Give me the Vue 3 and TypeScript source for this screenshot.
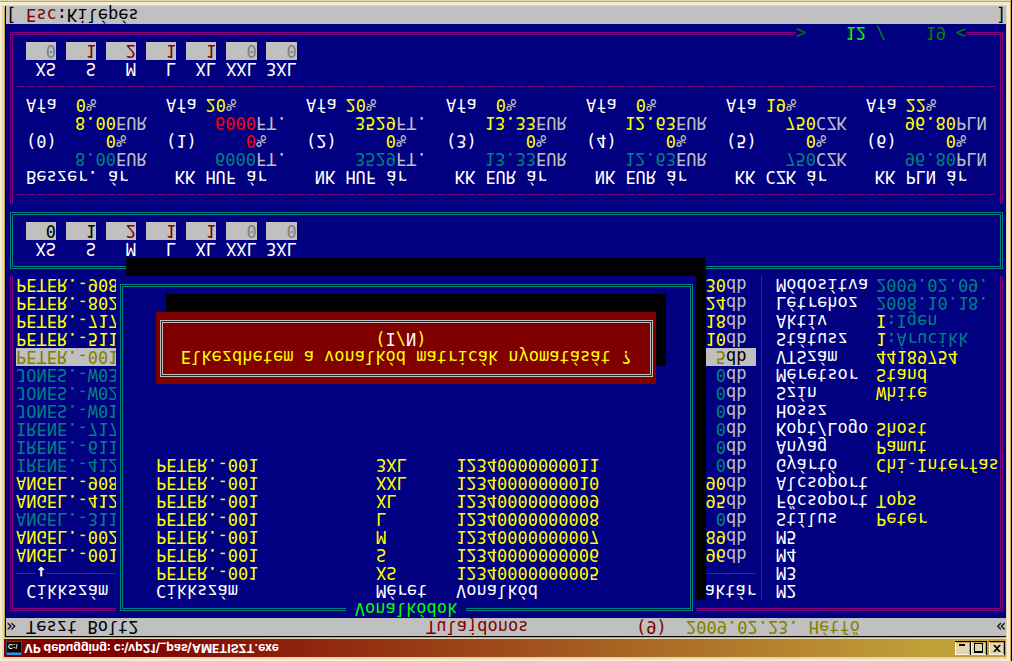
<script setup lang="ts">
interface SizeField { label: string; value: string; tone: string }
interface Article { code: string; stock: string; tone: string }
interface Detail { label: string; key?: string; value?: string; tone?: string }
interface Price { title: string; key: string; list: string; unit: string; percent: string; vat: string; tone: string }

const sizeNames = ['XS', 'S', 'M', 'L', 'XL', 'XXL', '3XL']

const makeSizes = (values: string[], tones: string[]): SizeField[] =>
  sizeNames.map((label, i) => ({ label, value: values[i], tone: tones[i] }))

const panels = [
  {
    id: 'stock',
    sizes: makeSizes(['0', '1', '2', '1', '1', '0', '0'], ['black', 'black', 'maroon', 'maroon', 'maroon', 'gray', 'gray']),
  },
  {
    id: 'order',
    sizes: makeSizes(['0', '1', '2', '1', '1', '0', '0'], ['gray', 'maroon', 'maroon', 'maroon', 'maroon', 'gray', 'gray']),
  },
]

const articles: Article[] = [
  { code: 'ANGEL.-001', stock: '96', tone: 'yellow' },
  { code: 'ANGEL.-002', stock: '89', tone: 'yellow' },
  { code: 'ANGEL.-311', stock: '0', tone: 'teal' },
  { code: 'ANGEL.-412', stock: '95', tone: 'yellow' },
  { code: 'ANGEL.-908', stock: '90', tone: 'yellow' },
  { code: 'IRENE.-412', stock: '0', tone: 'teal' },
  { code: 'IRENE.-611', stock: '0', tone: 'teal' },
  { code: 'IRENE.-717', stock: '0', tone: 'teal' },
  { code: 'JONES.-W01', stock: '0', tone: 'teal' },
  { code: 'JONES.-W02', stock: '0', tone: 'teal' },
  { code: 'JONES.-W03', stock: '0', tone: 'teal' },
  { code: 'PETER.-001', stock: '5', tone: 'selected' },
  { code: 'PETER.-511', stock: '10', tone: 'yellow' },
  { code: 'PETER.-717', stock: '18', tone: 'yellow' },
  { code: 'PETER.-802', stock: '24', tone: 'yellow' },
  { code: 'PETER.-908', stock: '30', tone: 'yellow' },
]

const details: Detail[] = [
  { label: 'M2' },
  { label: 'M3' },
  { label: 'M4' },
  { label: 'M5' },
  { label: 'Stílus', value: 'Peter' },
  { label: 'Főcsoport', value: 'Tops' },
  { label: 'Alcsoport' },
  { label: 'Gyártó', value: 'Chi-Interfas' },
  { label: 'Anyag', value: 'Pamut' },
  { label: 'Kopt/Logo', value: 'Shost' },
  { label: 'Hossz' },
  { label: 'Szín', value: 'White' },
  { label: 'Méretsor', value: 'Stand' },
  { label: 'VTSzám', value: '44189754' },
  { label: 'Státusz', key: '1', value: ':Árucikk', tone: 'teal' },
  { label: 'Aktív', key: 'I', value: ':Igen', tone: 'teal' },
  { label: 'Létrehoz', value: '2008.10.18.', tone: 'teal' },
  { label: 'Módosítva', value: '2009.02.09.', tone: 'teal' },
]

const prices: Price[] = [
  { title: 'Beszer. ár', key: '(0)', list: '8.00', unit: 'EUR', percent: '0', vat: '0', tone: 'yellow' },
  { title: 'KK HUF ár', key: '(1)', list: '6000', unit: 'FT.', percent: '0', vat: '20', tone: 'red' },
  { title: 'NK HUF ár', key: '(2)', list: '3529', unit: 'FT.', percent: '0', vat: '20', tone: 'yellow' },
  { title: 'KK EUR ár', key: '(3)', list: '13.33', unit: 'EUR', percent: '0', vat: '0', tone: 'yellow' },
  { title: 'NK EUR ár', key: '(4)', list: '12.63', unit: 'EUR', percent: '0', vat: '0', tone: 'yellow' },
  { title: 'KK CZK ár', key: '(5)', list: '750', unit: 'CZK', percent: '0', vat: '19', tone: 'yellow' },
  { title: 'KK PLN ár', key: '(6)', list: '96.80', unit: 'PLN', percent: '0', vat: '22', tone: 'yellow' },
]

const barcodes = sizeNames.map((size, i) => ({
  code: 'PETER.-001',
  size,
  barcode: String(12340000000005 + i),
}))
</script>

<template>
  <main class="window">
    <header class="titlebar">
      <svg class="app-icon" viewBox="0 0 16 14" aria-hidden="true">
        <rect width="16" height="14" fill="#2a4a74" />
        <rect x="1" y="3" width="14" height="10" fill="#000" />
        <rect x="1" y="0" width="14" height="2" fill="#2f8fe0" />
        <text x="2" y="11" class="icon-text">C:\</text>
      </svg>
      <h1>VP debugging: c:\vp21\_pas\AMETISZT.exe</h1>
      <div class="controls">
        <button type="button" aria-label="Minimize">
          <svg viewBox="0 0 16 14"><rect x="4" y="9" width="6" height="2" /></svg>
        </button>
        <button type="button" aria-label="Maximize">
          <svg viewBox="0 0 16 14"><path d="M3 2h9v10H3zM4 4v7h7V4z" fill-rule="evenodd" /></svg>
        </button>
        <button type="button" class="close" aria-label="Close">
          <svg viewBox="0 0 16 14"><path d="M4 3h2l2 2 2-2h2L9 6.500 12 10h-2L8 8l-2 2H4l3-3.500z" /></svg>
        </button>
      </div>
    </header>

    <div class="screen">
      <div class="bar top">
        <span class="c0">»</span>
        <span class="c2">Teszt Bolt2</span>
        <span class="c42 maroon">Tulajdonos</span>
        <span class="c63 maroon">(9)</span>
        <span class="c68 olive">2009.02.23. Hétfő</span>
        <span class="c99">«</span>
      </div>

      <section class="catalog frame">
        <table class="articles">
          <thead>
            <tr><th>&nbsp;Cikkszám</th><th></th><th class="end">Raktár</th></tr>
            <tr aria-hidden="true">
              <td class="rule sorted"><span class="arrow">↓</span></td><td></td><td class="rule"></td>
            </tr>
          </thead>
          <tbody>
            <tr v-for="a in articles" :key="a.code" :class="a.tone">
              <td>{{ a.code }}</td><td></td>
              <td class="amount">{{ a.stock }}<span class="unit">db</span></td>
            </tr>
          </tbody>
        </table>
        <div class="divider"></div>
        <dl class="details">
          <div v-for="d in details" :key="d.label">
            <dt>{{ d.label }}</dt>
            <dd :class="d.tone"><span class="yellow">{{ d.key }}</span>{{ d.value }}</dd>
          </div>
        </dl>

        <div class="prices">
          <div class="dashes"></div>
          <ul>
            <li v-for="p in prices" :key="p.key">
              <h2>{{ p.title }}</h2>
              <p><span></span><span class="num teal">{{ p.list }}</span><span>{{ p.unit }}</span></p>
              <p><b>{{ p.key }}</b><span class="num" :class="p.tone">{{ p.percent }}</span><span>%</span></p>
              <p><span></span><span class="num" :class="p.tone">{{ p.list }}</span><span>{{ p.unit }}</span></p>
              <p class="vat"><b>Afa</b><span class="num yellow">{{ p.vat }}</span><span>%</span></p>
            </li>
          </ul>
          <div class="dashes"></div>
        </div>
        <p class="counter green">
          <span>&gt;</span><span class="num lime">12</span><span class="num">/</span><span class="num">19</span><span class="num">&lt;</span>
        </p>
      </section>

      <section v-for="panel in panels" :key="panel.id" :class="['sizes', panel.id, { frame: panel.id === 'stock' }]">
        <label v-for="s in panel.sizes" :key="s.label">
          <span>{{ s.label }}</span>
          <input type="text" :value="s.value" :class="s.tone">
        </label>
      </section>

      <div class="bar bottom">
        <span class="c0">[</span>
        <span class="c2"><span class="maroon">Esc</span>:Kilépés</span>
        <span class="c99">]</span>
      </div>

      <section class="popup frame" aria-labelledby="popup-title">
        <h2 id="popup-title">Vonalkódok</h2>
        <table>
          <thead>
            <tr><th>Cikkszám</th><th>Méret</th><th>Vonalkód</th></tr>
          </thead>
          <tbody>
            <tr v-for="b in barcodes" :key="b.size">
              <td>{{ b.code }}</td><td>{{ b.size }}</td><td>{{ b.barcode }}</td>
            </tr>
          </tbody>
        </table>
      </section>

      <div class="dialog frame" role="alertdialog" aria-labelledby="question">
        <p id="question">Elkezdhetem a vonalkód matricák nyomatását ?</p>
        <p>(<button type="button">I</button>/<button type="button">N</button>)&nbsp;</p>
      </div>
    </div>
  </main>
</template>

<style>
body {
  margin: 0;
  background: #e4d6b0;
}
</style>

<style scoped>
* {
  box-sizing: border-box;
  margin: 0;
  padding: 0;
}

.window {
  --navy: #000080;
  --silver: #c0c0c0;
  --purple: #800080;
  --teal: #008080;
  --row: 18px;
  transform: scaleY(-1);
  padding: 4px 5px 6px 4px;
  background: #e4d6b0;
  border-right: 1px solid #000;
  box-shadow: inset -1px 0 #c8a840, inset 0 -1px #e4d6b0, inset 0 -2px #c8a840, inset 2px 2px #f4ecd0, inset -4px -5px #f4ecd0;
}

.titlebar {
  display: flex;
  align-items: center;
  height: 18px;
  padding: 0 1px 0 2px;
  background: linear-gradient(90deg, #800000 12%, #c0a038 92%);
}

.app-icon {
  width: 16px;
  height: 14px;
}

.icon-text {
  font: bold 7px "Liberation Sans", sans-serif;
  fill: #fff;
}

h1 {
  flex: 1;
  padding-left: 2px;
  font: bold 12px/18px Inter, Tahoma, sans-serif;
  color: #fff;
  white-space: nowrap;
}

.controls {
  display: flex;
}

.controls button {
  width: 16px;
  height: 14px;
  background: #e4d6b0;
  border: 0;
  box-shadow: inset -1px -1px #000, inset 1px 1px #fff8e0, inset -2px -2px #b89c58;
}

.controls .close {
  margin-left: 2px;
}

.controls svg {
  display: block;
  width: 16px;
  height: 14px;
}

.screen {
  display: grid;
  grid-template-columns: repeat(100, minmax(0, 1fr));
  grid-template-rows: repeat(35, var(--row));
  margin: 2px 0 0 1px;
  border-top: 1px solid #000;
  border-left: 1px solid #000;
  background: var(--navy);
  color: #fff;
  font: 17px/18px "DejaVu Sans Mono", "Liberation Mono", monospace;
  white-space: nowrap;
  box-shadow: -1px -1px #c8a840;
}

.yellow { color: #ffff00; }
.teal { color: #008080; }
.red { color: #ff0000; }
.green { color: #008000; }
.lime { color: #00ff00; }
.maroon { color: #800000; }
.olive { color: #808000; }
.black { color: #000; }
.gray { color: #808080; }

.bar {
  display: grid;
  grid-column: 1 / -1;
  grid-template-columns: subgrid;
  background: var(--silver);
  color: #000;
}

.bar > span { grid-row: 1; }
.top { grid-row: 1; }
.bottom { grid-row: 35; }
.c0 { grid-column: 1; }
.c2 { grid-column: 3 / 20; }
.c42 { grid-column: 43 / 55; }
.c63 { grid-column: 64 / 68; }
.c68 { grid-column: 69 / 90; }
.c99 { grid-column: 100; }

.frame {
  position: relative;
}

.frame::before {
  content: "";
  position: absolute;
  inset: 7px 3px 8px 4px;
  border: 3px double var(--line);
  pointer-events: none;
}

.catalog {
  --line: var(--purple);
  grid-area: 2 / 1 / 35 / -1;
  display: grid;
  grid-template: subgrid / subgrid;
}

.articles {
  display: block;
  grid-area: 2 / 2 / 20 / 76;
}

.articles thead,
.articles tbody {
  display: block;
}

.articles tr {
  display: grid;
  grid-template-columns: minmax(0, 10fr) minmax(0, 54fr) minmax(0, 10fr);
  height: var(--row);
}

th {
  font-weight: normal;
  text-align: left;
}

th.end { text-align: right; }

.amount {
  display: grid;
  grid-template-columns: 7fr 3fr;
  text-align: right;
}

.unit {
  color: var(--silver);
  text-align: left;
}

.selected {
  background: var(--silver);
  color: #808000;
}

.selected .unit { color: #000; }

.rule {
  background: linear-gradient(var(--purple), var(--purple)) 0 8px / 100% 1px no-repeat;
}

.sorted { padding-left: 20%; }

.arrow {
  display: block;
  width: 10px;
  background: var(--navy);
  font-weight: bold;
}

.divider {
  grid-area: 2 / 76 / 20 / 77;
  width: 6px;
  border-right: 1px solid var(--purple);
}

.details {
  grid-area: 2 / 78 / 20 / 99;
}

.details div {
  display: grid;
  grid-template-columns: minmax(0, 10fr) minmax(0, 11fr);
  height: var(--row);
}

.details dd { color: #ffff00; }
.details dd.teal { color: #008080; }

.prices {
  grid-area: 24 / 2 / 31 / 100;
}

.dashes {
  height: var(--row);
  background: repeating-linear-gradient(90deg, transparent 0 1px, var(--purple) 1px 9px, transparent 9px 10px) 0 9px / 100% 1px no-repeat;
}

.prices ul {
  display: grid;
  grid-template-columns: repeat(7, minmax(0, 1fr));
  margin: 0 -10px 0 10px;
  list-style: none;
}

.prices h2 {
  width: 72%;
  font: inherit;
  text-align: right;
}

.prices p {
  display: grid;
  grid-template-columns: minmax(0, 3fr) minmax(0, 6fr) minmax(0, 5fr);
  color: var(--silver);
}

.prices p.vat { grid-template-columns: minmax(0, 3fr) minmax(0, 3fr) minmax(0, 8fr); }
.prices b { font-weight: normal; color: #fff; }
.num { text-align: right; }

.counter {
  grid-area: 33 / 80 / 34 / 97;
  position: relative;
  display: grid;
  grid-template-columns: minmax(0, 1fr) minmax(0, 6fr) minmax(0, 2fr) minmax(0, 6fr) minmax(0, 2fr);
  background: var(--navy);
}

.sizes {
  display: grid;
  grid-template: subgrid / subgrid;
  grid-column: 1 / -1;
}

.stock {
  --line: var(--teal);
  grid-row: 21 / 25;
  background: var(--navy);
}

.order { grid-row: 31 / 35; }

.sizes label {
  display: grid;
  grid-row: 2 / 4;
  grid-template-rows: var(--row) var(--row);
  text-align: right;
}

.sizes label:nth-child(1) { grid-column: 3 / 6; }
.sizes label:nth-child(2) { grid-column: 7 / 10; }
.sizes label:nth-child(3) { grid-column: 11 / 14; }
.sizes label:nth-child(4) { grid-column: 15 / 18; }
.sizes label:nth-child(5) { grid-column: 19 / 22; }
.sizes label:nth-child(6) { grid-column: 23 / 26; }
.sizes label:nth-child(7) { grid-column: 27 / 30; }

.sizes input {
  width: 100%;
  min-width: 0;
  height: var(--row);
  border: 0;
  background: var(--silver);
  font: inherit;
  text-align: right;
}

.popup {
  --line: var(--teal);
  grid-area: 2 / 12 / 21 / 70;
  background: var(--navy);
  box-shadow: 10px 18px #000;
}

.popup h2 {
  position: relative;
  width: 120px;
  margin: 0 auto;
  background: var(--navy);
  color: #00ff00;
  font: inherit;
  text-align: center;
}

.popup table,
.popup thead,
.popup tbody {
  display: block;
}

.popup tr {
  display: grid;
  grid-template-columns: minmax(0, 22fr) minmax(0, 8fr) minmax(0, 24fr);
  height: var(--row);
  padding-left: 40px;
}

.popup td { color: #ffff00; }

.dialog {
  --line: var(--silver);
  grid-area: 15 / 16 / 19 / 66;
  padding-top: 18px;
  background: #800000;
  color: #ffff00;
  text-align: center;
  box-shadow: 10px 18px #000;
}

.dialog button {
  border: 0;
  background: none;
  color: #fff;
  font: inherit;
}
</style>
